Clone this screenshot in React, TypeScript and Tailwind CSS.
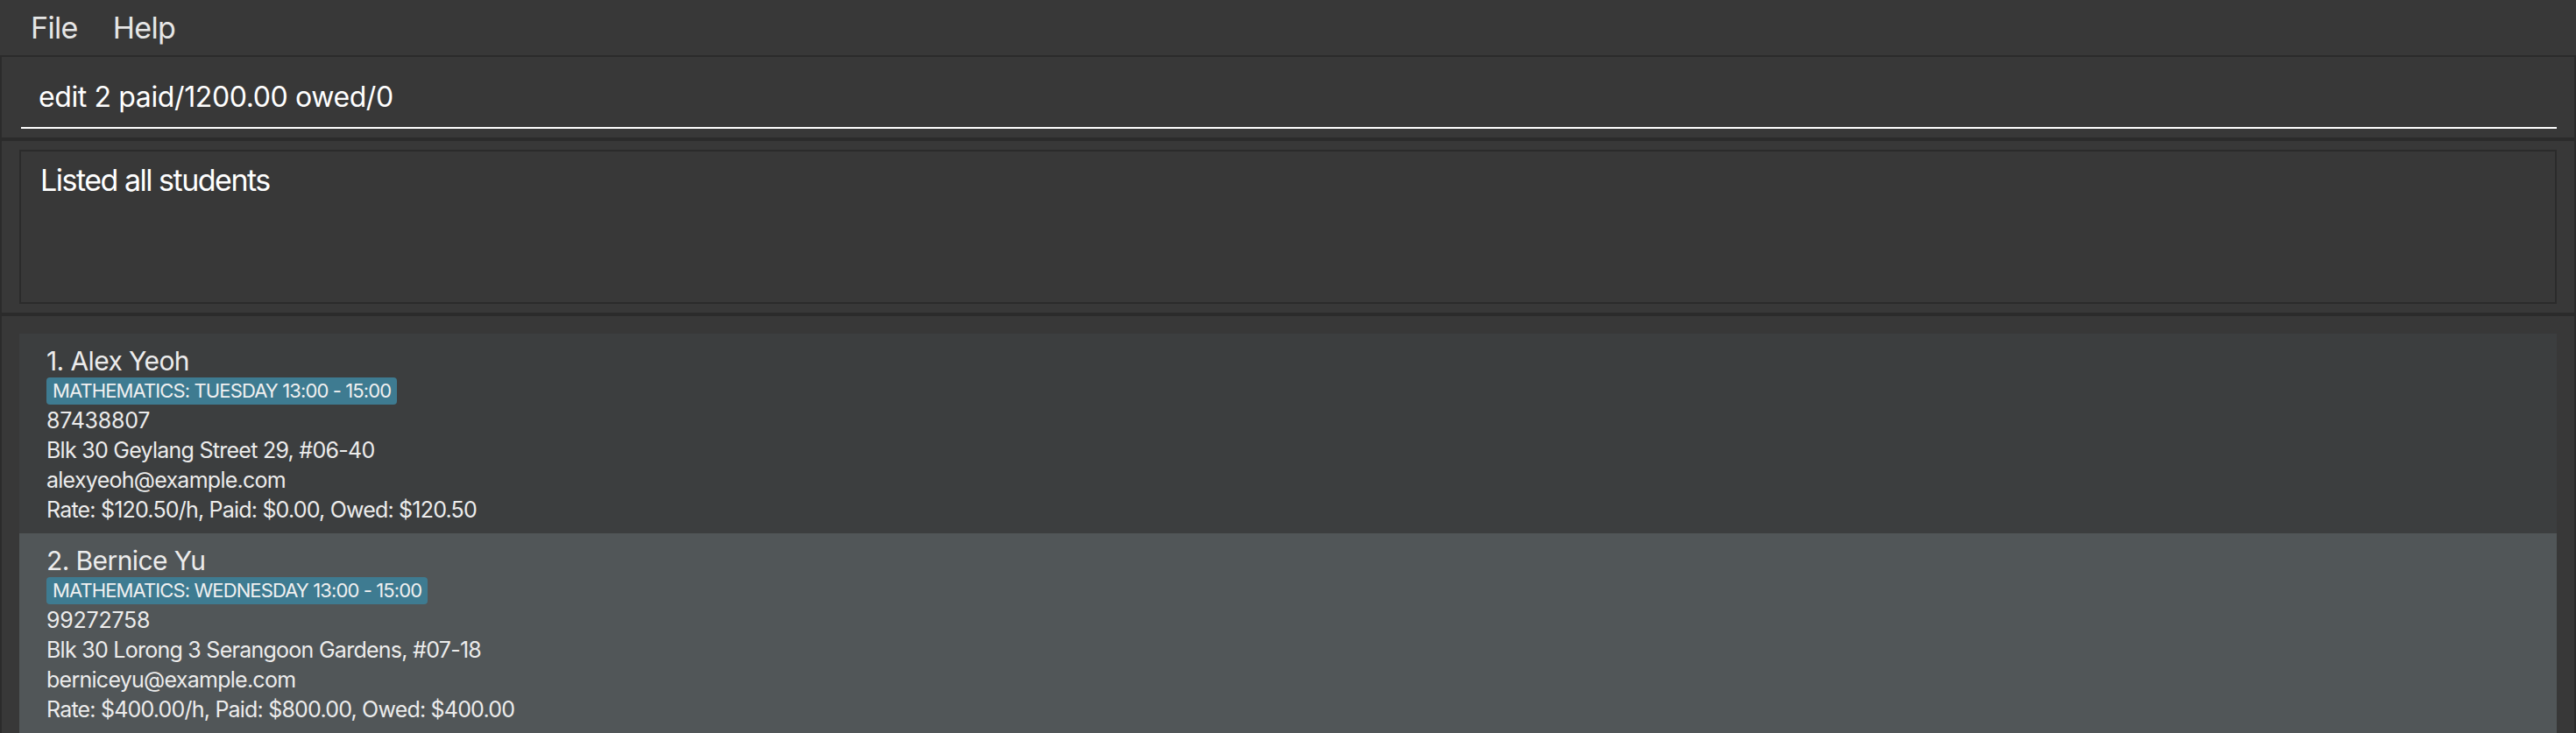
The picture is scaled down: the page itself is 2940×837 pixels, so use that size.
import React from 'react';

type Student = {
  index: number;
  name: string;
  tag: string;
  phone: string;
  address: string;
  email: string;
  fees: string;
};

const students: Student[] = [
  {
    index: 1,
    name: 'Alex Yeoh',
    tag: 'MATHEMATICS: TUESDAY 13:00 - 15:00',
    phone: '87438807',
    address: 'Blk 30 Geylang Street 29, #06-40',
    email: 'alexyeoh@example.com',
    fees: 'Rate: $120.50/h, Paid: $0.00, Owed: $120.50',
  },
  {
    index: 2,
    name: 'Bernice Yu',
    tag: 'MATHEMATICS: WEDNESDAY 13:00 - 15:00',
    phone: '99272758',
    address: 'Blk 30 Lorong 3 Serangoon Gardens, #07-18',
    email: 'berniceyu@example.com',
    fees: 'Rate: $400.00/h, Paid: $800.00, Owed: $400.00',
  },
];

const StudentCard: React.FC<{ student: Student; odd: boolean }> = ({ student, odd }) => (
  <div
    className={`flex flex-col items-start pl-[31px] pt-[13px] pb-[10px] text-[#ececec] tracking-[-0.046em] ${
      odd ? 'bg-[#515658]' : 'bg-[#3c3e3f]'
    }`}
  >
    <div className="text-[30px] leading-[36px] tracking-[-0.02em]">
      {student.index}. {student.name}
    </div>
    <div className="mt-px rounded-[4px] bg-[#3e7b91] px-[7px] text-[22px] leading-[31px] tracking-[-0.04em] text-[#f0f0f0]">
      {student.tag}
    </div>
    <div className="mt-px text-[25px] leading-[34px] tracking-[-0.01em]">{student.phone}</div>
    <div className="text-[25px] leading-[34px]">{student.address}</div>
    <div className="text-[25px] leading-[34px]">{student.email}</div>
    <div className="text-[25px] leading-[34px] tracking-[-0.032em]">{student.fees}</div>
  </div>
);

export default function App() {
  return (
    <div className="flex h-[837px] w-[2940px] flex-col overflow-hidden bg-[#383838] font-['Inter','Noto_Sans',sans-serif]">
      {/* Menu bar */}
      <div className="flex h-[63px] shrink-0 items-center gap-[40px] pl-[35px] text-[34px] tracking-[-0.02em] text-[#e6e6e6]">
        <span>File</span>
        <span>Help</span>
      </div>

      {/* Command box */}
      <div className="h-[96px] shrink-0 border-2 border-[#2b2b2b] pl-[22px] pr-[20px] pt-[26px]">
        <div className="border-b-2 border-white pb-[14px] pl-[20px] text-[32px] leading-[40px] tracking-[-0.012em] text-white">
          edit 2 paid/1200.00 owed/0
        </div>
      </div>

      {/* Result display */}
      <div className="h-[200px] shrink-0 border-2 border-[#2b2b2b] px-[20px] py-[10px]">
        <div className="h-full border-2 border-[#2b2b2b] pl-[22px] pt-[12px] text-[34px] leading-[41px] tracking-[-0.044em] text-white">
          Listed all students
        </div>
      </div>

      {/* Student list */}
      <div className="min-h-0 flex-1 overflow-hidden border-2 border-b-0 border-[#2b2b2b] px-[20px] pt-[20px]">
        {students.map((s, i) => (
          <StudentCard key={s.index} student={s} odd={i % 2 === 1} />
        ))}
      </div>
    </div>
  );
}
